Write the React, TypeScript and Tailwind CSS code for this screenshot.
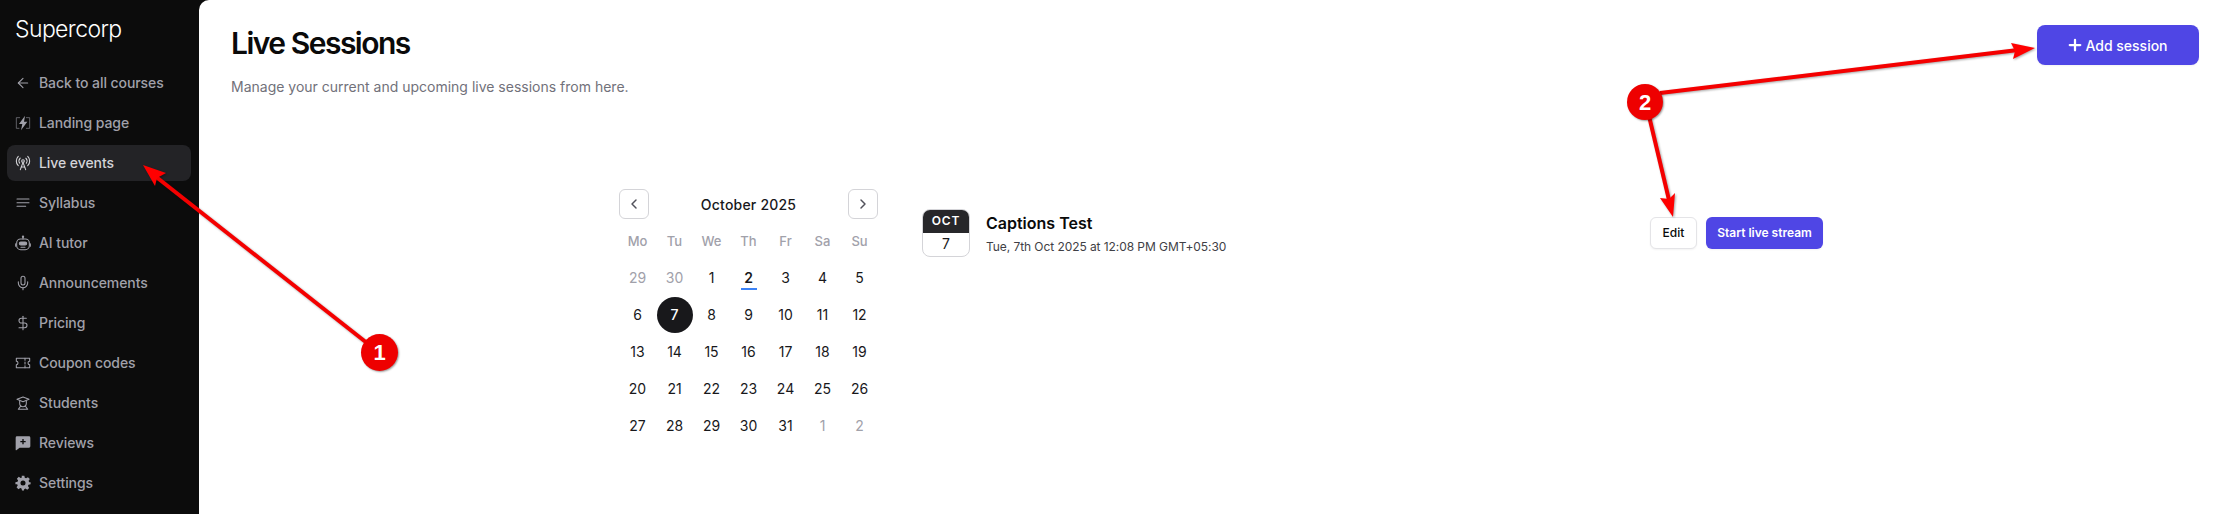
import { ArrowLeft, ChevronLeft, ChevronRight, DollarSign, Mic, Plus, RadioTower } from 'lucide-react'
import type { ReactNode } from 'react'

const icon = 'w-4 h-4 shrink-0'

function Svg({ children }: { children: ReactNode }) {
  return (
    <svg viewBox="0 0 24 24" fill="none" stroke="currentColor" strokeWidth="1.6" strokeLinecap="round" strokeLinejoin="round" className={icon}>
      {children}
    </svg>
  )
}

const navItems: { label: string; active?: boolean; icon: ReactNode }[] = [
  { label: 'Back to all courses', icon: <ArrowLeft className={icon} strokeWidth={1.6} /> },
  {
    label: 'Landing page',
    icon: (
      <Svg>
        <path d="M7 4H2v16h4M17 4h5v16h-5" strokeWidth="1.2" opacity="0.7" />
        <path d="M15 1 6 13.5h5L9 23l9.5-13H13.5z" fill="currentColor" stroke="none" />
      </Svg>
    ),
  },
  { label: 'Live events', active: true, icon: <RadioTower className={icon} strokeWidth={1.6} /> },
  {
    label: 'Syllabus',
    icon: (
      <Svg>
        <path d="M3 6h18M3 11.5h18M3 17h13" />
      </Svg>
    ),
  },
  {
    label: 'AI tutor',
    icon: (
      <Svg>
        <path d="M12 3v3" />
        <circle cx="12" cy="2.5" r="1" fill="currentColor" />
        <rect x="2.5" y="6" width="19" height="16" rx="6" />
        <path d="M1 13v4M23 13v4" />
        <rect x="6.5" y="10.5" width="11" height="4.5" rx="2.2" fill="currentColor" />
        <path d="M9 18.5h6" />
      </Svg>
    ),
  },
  { label: 'Announcements', icon: <Mic className={icon} strokeWidth={1.6} /> },
  { label: 'Pricing', icon: <DollarSign className={icon} strokeWidth={1.6} /> },
  {
    label: 'Coupon codes',
    icon: (
      <Svg>
        <path d="M2 5h20v4.5a2.5 2.5 0 0 0 0 5V19H2v-4.5a2.5 2.5 0 0 0 0-5z" />
        <path d="M15 5v3M15 10.5v3M15 16v3" />
      </Svg>
    ),
  },
  {
    label: 'Students',
    icon: (
      <Svg>
        <path d="M12 3 3 6.5 12 10l9-3.5z" />
        <path d="M7 9v3.5a5 5 0 0 0 10 0V9" />
        <path d="M8.5 16.5 5 21.5h14l-3.5-5" />
      </Svg>
    ),
  },
  {
    label: 'Reviews',
    icon: (
      <svg viewBox="0 0 24 24" fill="currentColor" className={icon}>
        <path fillRule="evenodd" d="M3 2h18a2 2 0 0 1 2 2v13a2 2 0 0 1-2 2H7l-5 4a1 1 0 0 1-1-1V4a2 2 0 0 1 2-2zm8 4v3H8v2h3v3h2v-3h3V9h-3V6z" />
      </svg>
    ),
  },
  {
    label: 'Settings',
    icon: (
      <svg viewBox="0 0 24 24" fill="currentColor" className={icon}>
        <path fillRule="evenodd" d="M10 1h4l.7 3.2 1.9.8 2.8-1.8 2.8 2.8-1.8 2.8.8 1.9L23.4 11v3l-3.2.7-.8 1.9 1.8 2.8-2.8 2.8-2.8-1.8-1.9.8L13.5 23.4h-3l-.7-3.2-1.9-.8-2.8 1.8-2.8-2.8 1.8-2.8-.8-1.9L.6 14v-3l3.2-.7.8-1.9L2.8 5.6l2.8-2.8 2.8 1.8 1.9-.8zM12 8.2a3.8 3.8 0 1 0 0 7.6 3.8 3.8 0 0 0 0-7.6z" />
      </svg>
    ),
  },
]

const weekDays = ['Mo', 'Tu', 'We', 'Th', 'Fr', 'Sa', 'Su']

// leading and trailing days belong to the neighbouring months
const days = [
  ...[29, 30].map((d) => ({ d, muted: true })),
  ...Array.from({ length: 31 }, (_, i) => ({ d: i + 1, muted: false })),
  ...[1, 2].map((d) => ({ d, muted: true })),
]

function Sidebar() {
  return (
    <aside className="w-[199px] shrink-0 bg-[#0c0c0c] flex flex-col">
      <div className="h-[65px] pl-[15px] pt-[13px] text-[23px] leading-8 font-light tracking-[-0.6px] text-white">Supercorp</div>
      <nav className="flex flex-col gap-1 pl-[7px] pr-2">
        {navItems.map((item) => (
          <div
            key={item.label}
            className={
              item.active
                ? 'h-9 flex items-center gap-2 pl-2 rounded-lg bg-[#232326] text-[14px] font-medium tracking-[-0.07px] text-[#d4d4d8]'
                : 'h-9 flex items-center gap-2 pl-2 rounded-lg text-[14px] font-medium tracking-[-0.07px] text-[#a1a1aa]'
            }
          >
            {item.icon}
            <span className="-mt-px">{item.label}</span>
          </div>
        ))}
      </nav>
    </aside>
  )
}

function Calendar() {
  return (
    <div className="w-[259px] shrink-0">
      <div className="flex items-center justify-between">
        <button className="w-[30px] h-[30px] flex items-center justify-center rounded-md border border-[#d4d4d8] text-[#52525b]">
          <ChevronLeft className="w-4 h-4" strokeWidth={2.2} />
        </button>
        <div className="text-[14px] font-medium tracking-[0.2px] text-[#18181b]">October 2025</div>
        <button className="w-[30px] h-[30px] flex items-center justify-center rounded-md border border-[#d4d4d8] text-[#52525b]">
          <ChevronRight className="w-4 h-4" strokeWidth={2.2} />
        </button>
      </div>
      <div className="grid grid-cols-[repeat(7,37px)] grid-rows-[34px] auto-rows-[37px] mt-1.5 text-[14px] text-center">
        {weekDays.map((w) => (
          <div key={w} className="flex items-center justify-center text-[13px] font-medium text-[#a1a1aa]">
            {w}
          </div>
        ))}
        {days.map(({ d, muted }, i) => (
          <div key={i} className="relative flex items-center justify-center">
            {!muted && d === 7 ? (
              <span className="w-9 h-9 rounded-full bg-[#18181b] text-white flex items-center justify-center font-medium">7</span>
            ) : (
              <span className={muted ? 'text-[#a1a1aa]' : d === 2 ? 'text-[#18181b] font-semibold' : 'text-[#18181b]'}>{d}</span>
            )}
            {!muted && d === 2 && <span className="absolute left-[11px] bottom-1.5 w-4 h-0.5 bg-[#3b82f6]" />}
          </div>
        ))}
      </div>
    </div>
  )
}

function SessionRow() {
  return (
    <div className="flex-1 flex items-start justify-between pl-[44px] pt-5">
      <div className="flex items-center gap-4">
        <div className="w-12 h-12 rounded-lg border border-[#d4d4d8] overflow-hidden flex flex-col items-center">
          <div className="w-12 h-6 -mt-px bg-[#27272a] text-white text-[12px] font-semibold tracking-[0.8px] flex items-center justify-center">OCT</div>
          <div className="text-[14px] leading-[22px] text-[#18181b]">7</div>
        </div>
        <div>
          <div className="text-[16px] leading-6 font-semibold text-[#0a0a0a]">Captions Test</div>
          <div className="text-[12px] leading-4 mt-1 tracking-[-0.07px] text-[#3f3f46]">Tue, 7th Oct 2025 at 12:08 PM GMT+05:30</div>
        </div>
      </div>
      <div className="flex items-center gap-[9px] pt-2">
        <button className="w-[47px] h-[32px] rounded-md border border-[#e4e4e7] bg-white shadow-xs text-[12px] font-medium text-[#0a0a0a]">Edit</button>
        <button className="w-[117px] h-[32px] rounded-md bg-[#4f46e5] shadow-xs text-[12px] font-semibold text-white">Start live stream</button>
      </div>
    </div>
  )
}

// annotation layer drawn over the screenshot
function Annotations() {
  return (
    <div className="absolute inset-0 pointer-events-none">
      <svg width="2222" height="514" className="absolute inset-0 drop-shadow-[1px_1px_1px_rgba(0,0,0,0.35)]">
        <g stroke="#f40000" strokeWidth="4" fill="none">
          <path d="M367 343 155 176" />
          <path d="M1660 93 2018 50" />
          <path d="M1649 116 1669 200" />
        </g>
        <g fill="#ff0000">
          <path d="M143 165 166 173 157 178 155 186z" />
          <path d="M2035 48 2011 43 2015 51 2013 59z" />
          <path d="M1673 217 1660 198 1669 199 1675 193z" />
        </g>
      </svg>
      <div className="absolute left-[361px] top-[334px] w-[37px] h-[37px] rounded-full bg-[#ee0000] shadow-[1px_1px_2px_rgba(0,0,0,0.4)] flex items-center justify-center text-white text-[22px] font-bold font-['Liberation_Sans',sans-serif]">1</div>
      <div className="absolute left-[1627px] top-[84px] w-9 h-9 rounded-full bg-[#ee0000] shadow-[1px_1px_2px_rgba(0,0,0,0.4)] flex items-center justify-center text-white text-[22px] font-bold font-['Liberation_Sans',sans-serif]">2</div>
    </div>
  )
}

export default function App() {
  return (
    <div className="relative h-screen flex overflow-hidden bg-[#0c0c0c] font-['Inter',sans-serif]">
      <Sidebar />
      <main className="flex-1 min-w-0 bg-white rounded-tl-[10px] pl-8 pr-[23px]">
        <header className="flex items-start justify-between pt-[25px]">
          <div>
            <h1 className="text-[30px] leading-9 font-semibold tracking-[-1.5px] text-[#0a0a0a]">Live Sessions</h1>
            <p className="mt-4 text-[14px] leading-5 text-[#71717a]">Manage your current and upcoming live sessions from here.</p>
          </div>
          <button className="w-[162px] h-10 pr-0.5 rounded-lg bg-[#4f46e5] shadow-xs text-white text-[14px] font-medium flex items-center justify-center gap-px">
            <Plus className="w-[18px] h-[18px]" strokeWidth={3} />
            Add session
          </button>
        </header>
        <section className="flex w-[1204px] ml-[388px] mt-[92px]">
          <Calendar />
          <SessionRow />
        </section>
      </main>
      <Annotations />
    </div>
  )
}
